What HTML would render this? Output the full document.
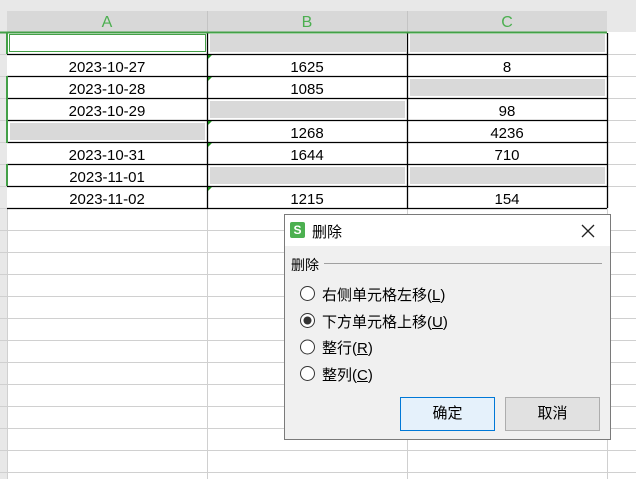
<!DOCTYPE html><html><head><meta charset="utf-8"><style>
body{margin:0;width:636px;height:479px;overflow:hidden;background:#fff;position:relative;font-family:"Liberation Sans","Noto Sans CJK SC",sans-serif}
.a{position:absolute}
.t{position:absolute;font-size:15px;color:#000;text-align:center;line-height:22px;margin-top:1px}
.g{position:absolute;background:#d9d9d9}
.cj{font-family:"Liberation Sans","Noto Sans CJK SC",sans-serif;font-size:14px}
</style></head><body>
<div class="a" style="left:0;top:0;width:636px;height:11px;background:#e8e8e8;border-bottom:1px solid #d0d0d0"></div>
<div class="a" style="left:0;top:11px;width:7px;height:468px;background:#e8e8e8"></div>
<div class="a" style="left:7px;top:11px;width:600px;height:21px;background:#d8d8d8"></div>
<div class="a" style="left:607px;top:11px;width:29px;height:21px;background:#e8e8e8"></div>
<div class="a" style="left:207px;top:11px;width:1px;height:21px;background:#c4c4c4"></div>
<div class="a" style="left:407px;top:11px;width:1px;height:21px;background:#c4c4c4"></div>
<div class="t" style="left:7px;top:11px;width:200px;color:#4caf50;font-size:16px">A</div>
<div class="t" style="left:207px;top:11px;width:200px;color:#4caf50;font-size:16px">B</div>
<div class="t" style="left:407px;top:11px;width:200px;color:#4caf50;font-size:16px">C</div>
<svg class="a" style="left:0;top:0" width="636" height="479">
<g stroke="#d0d0d0" stroke-width="1">
<line x1="0" y1="54.5" x2="7" y2="54.5"/><line x1="0" y1="76.5" x2="7" y2="76.5"/><line x1="0" y1="98.5" x2="7" y2="98.5"/><line x1="0" y1="120.5" x2="7" y2="120.5"/><line x1="0" y1="142.5" x2="7" y2="142.5"/><line x1="0" y1="164.5" x2="7" y2="164.5"/><line x1="0" y1="186.5" x2="7" y2="186.5"/><line x1="0" y1="208.5" x2="7" y2="208.5"/>
<line x1="607" y1="54.5" x2="636" y2="54.5"/><line x1="607" y1="76.5" x2="636" y2="76.5"/><line x1="607" y1="98.5" x2="636" y2="98.5"/><line x1="607" y1="120.5" x2="636" y2="120.5"/><line x1="607" y1="142.5" x2="636" y2="142.5"/><line x1="607" y1="164.5" x2="636" y2="164.5"/><line x1="607" y1="186.5" x2="636" y2="186.5"/>
<line x1="0" y1="230.5" x2="636" y2="230.5"/><line x1="0" y1="252.5" x2="636" y2="252.5"/><line x1="0" y1="274.5" x2="636" y2="274.5"/><line x1="0" y1="296.5" x2="636" y2="296.5"/><line x1="0" y1="318.5" x2="636" y2="318.5"/><line x1="0" y1="340.5" x2="636" y2="340.5"/><line x1="0" y1="362.5" x2="636" y2="362.5"/><line x1="0" y1="384.5" x2="636" y2="384.5"/><line x1="0" y1="406.5" x2="636" y2="406.5"/><line x1="0" y1="428.5" x2="636" y2="428.5"/><line x1="0" y1="450.5" x2="636" y2="450.5"/><line x1="0" y1="472.5" x2="636" y2="472.5"/>
<line x1="207.5" y1="208" x2="207.5" y2="479"/><line x1="407.5" y1="208" x2="407.5" y2="479"/><line x1="607.5" y1="208" x2="607.5" y2="479"/>
<line x1="7.5" y1="208" x2="7.5" y2="479"/>
</g>
<g stroke="#000" stroke-width="1.3">
<line x1="7" y1="54.5" x2="607" y2="54.5"/><line x1="7" y1="76.5" x2="607" y2="76.5"/><line x1="7" y1="98.5" x2="607" y2="98.5"/><line x1="7" y1="120.5" x2="607" y2="120.5"/><line x1="7" y1="142.5" x2="607" y2="142.5"/><line x1="7" y1="164.5" x2="607" y2="164.5"/><line x1="7" y1="186.5" x2="607" y2="186.5"/><line x1="7" y1="208.5" x2="607" y2="208.5"/>
<line x1="207.5" y1="33" x2="207.5" y2="208"/><line x1="407.5" y1="33" x2="407.5" y2="208"/><line x1="607.5" y1="33" x2="607.5" y2="208"/>
</g>
<line x1="0" y1="32.5" x2="607" y2="32.5" stroke="#43a047" stroke-width="2"/>
<g stroke="#43a047" stroke-width="2"><line x1="7" y1="32" x2="7" y2="54"/><line x1="7" y1="76" x2="7" y2="143"/><line x1="7" y1="164" x2="7" y2="186"/></g>
<rect x="9.5" y="34.5" width="196" height="17" fill="#fff" stroke="#43a047"/>
<g fill="#1a8a1a"><path d="M208 55h4l-4 4z"/><path d="M208 77h4l-4 4z"/><path d="M208 121h4l-4 4z"/><path d="M208 143h4l-4 4z"/><path d="M208 187h4l-4 4z"/></g>
</svg>
<div class="g" style="left:210px;top:34px;width:196px;height:18px"></div>
<div class="g" style="left:410px;top:34px;width:195px;height:18px"></div>
<div class="g" style="left:410px;top:79px;width:195px;height:17px"></div>
<div class="g" style="left:210px;top:101px;width:195px;height:17px"></div>
<div class="g" style="left:10px;top:123px;width:195px;height:17px"></div>
<div class="g" style="left:210px;top:167px;width:195px;height:17px"></div>
<div class="g" style="left:410px;top:167px;width:195px;height:17px"></div>
<div class="t" style="left:7px;top:56px;width:200px">2023-10-27</div><div class="t" style="left:207px;top:56px;width:200px">1625</div><div class="t" style="left:407px;top:56px;width:200px">8</div>
<div class="t" style="left:7px;top:78px;width:200px">2023-10-28</div><div class="t" style="left:207px;top:78px;width:200px">1085</div>
<div class="t" style="left:7px;top:100px;width:200px">2023-10-29</div><div class="t" style="left:407px;top:100px;width:200px">98</div>
<div class="t" style="left:207px;top:122px;width:200px">1268</div><div class="t" style="left:407px;top:122px;width:200px">4236</div>
<div class="t" style="left:7px;top:144px;width:200px">2023-10-31</div><div class="t" style="left:207px;top:144px;width:200px">1644</div><div class="t" style="left:407px;top:144px;width:200px">710</div>
<div class="t" style="left:7px;top:166px;width:200px">2023-11-01</div>
<div class="t" style="left:7px;top:188px;width:200px">2023-11-02</div><div class="t" style="left:207px;top:188px;width:200px">1215</div><div class="t" style="left:407px;top:188px;width:200px">154</div>

<div class="a" style="left:284px;top:214px;width:325px;height:224px;border:1px solid #7a7a7a;background:#f0f0f0">
 <div class="a" style="left:0;top:0;width:325px;height:31px;background:#fff"></div>
 <div class="a" style="left:5px;top:7px;width:15px;height:16px;background:#4cb050;border-radius:2px;color:#fff;font-size:12px;line-height:16px;text-align:center;font-weight:bold">S</div>
 <div class="a cj" style="left:27px;top:6px;font-size:15px">删除</div>
 <svg class="a" style="left:296px;top:9px" width="14" height="14"><path d="M1 1L13 13M13 1L1 13" stroke="#222" stroke-width="1.3"/></svg>
 <div class="a cj" style="left:6px;top:40px">删除</div>
 <div class="a" style="left:39px;top:48px;width:278px;height:1px;background:#a0a0a0"></div>
 <svg class="a" style="left:14px;top:70px" width="20" height="110">
  <g fill="#fff" stroke="#333" stroke-width="1"><circle cx="8.5" cy="8.5" r="7"/><circle cx="8.5" cy="35.5" r="7"/><circle cx="8.5" cy="62" r="7"/><circle cx="8.5" cy="88.5" r="7"/></g>
  <circle cx="8.5" cy="35.5" r="4" fill="#333"/>
 </svg>
 <div class="a cj" style="left:37px;top:69px;font-size:15px">右侧单元格左移(<u>L</u>)</div>
 <div class="a cj" style="left:37px;top:96px;font-size:15px">下方单元格上移(<u>U</u>)</div>
 <div class="a cj" style="left:37px;top:122px;font-size:15px">整行(<u>R</u>)</div>
 <div class="a cj" style="left:37px;top:149px;font-size:15px">整列(<u>C</u>)</div>
 <div class="a cj" style="left:115px;top:182px;width:93px;height:32px;background:#e5f1fb;border:1px solid #0078d7;text-align:center;line-height:32px;font-size:15px">确定</div>
 <div class="a cj" style="left:220px;top:182px;width:93px;height:32px;background:#e1e1e1;border:1px solid #adadad;text-align:center;line-height:32px;font-size:15px">取消</div>
</div>
</body></html>
